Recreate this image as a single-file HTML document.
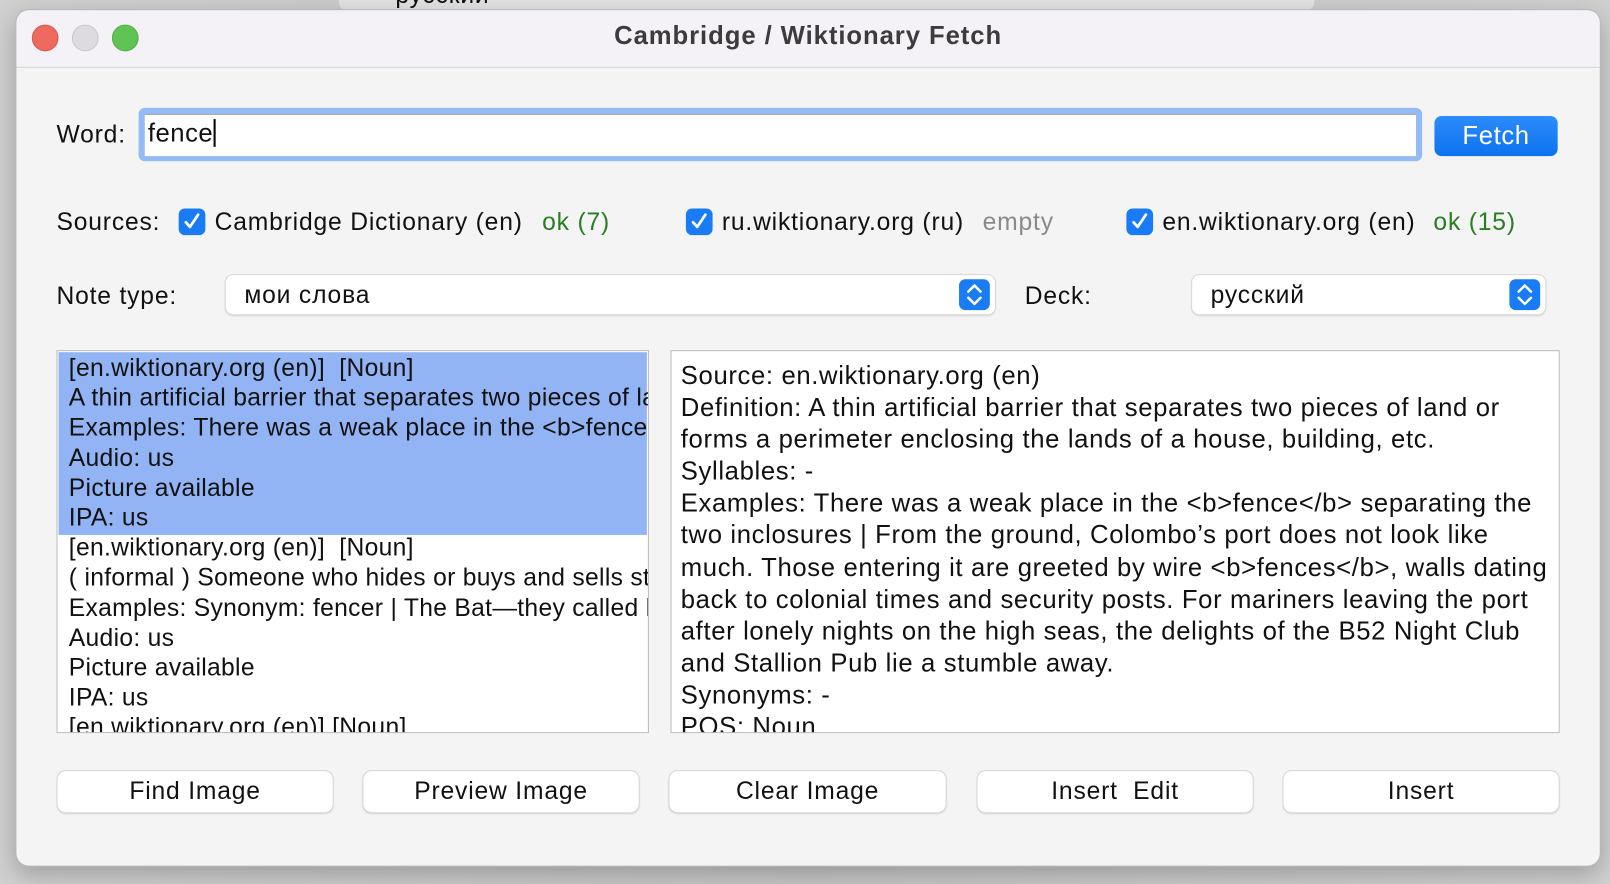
<!DOCTYPE html>
<html><head><meta charset="utf-8"><style>
body{margin:0;width:1610px;height:884px;overflow:hidden;background:linear-gradient(90deg,#d0d0d0,#c6c6c6 50%,#d0d0d0);font-family:"Liberation Sans","Noto Sans CJK SC",sans-serif;color:#111}
#w{position:absolute;left:0;top:0;width:1568px;height:861px;transform:scale(1.0268);transform-origin:0 0}
.a{position:absolute;white-space:nowrap}
.win{position:absolute;left:16px;top:10px;width:1542px;height:833px;background:#f4f4f4;border-radius:12px;box-shadow:0 0 0 1px #b8b8b8,0 8px 24px rgba(0,0,0,.25);overflow:hidden}
.tb{position:absolute;left:0;top:0;right:0;height:55px;background:#f5f2f7;border-bottom:1px solid #d4d4d4}
.dot{position:absolute;top:14px;width:24px;height:24px;border-radius:50%}
.t{font-size:24px;letter-spacing:0.8px}
.cb{position:absolute;width:26px;height:26px;background:#1a7cf5;border-radius:6px}
.cb svg{position:absolute;left:4px;top:4px}
.sel{position:absolute;background:#fff;border-radius:7px;box-shadow:0 0 0 1px #d8d8d8,0 1px 2px rgba(0,0,0,.2)}
.arr{position:absolute;right:5px;top:4px;width:30px;height:30px;background:#1a7cf5;border-radius:6px}
.box{position:absolute;background:#fff;border:1px solid #bcbcbc;overflow:hidden}
.btn{position:absolute;top:741px;width:268px;height:40px;background:#fff;border-radius:8px;box-shadow:0 0 0 1px #d6d6d6,0 1px 2px rgba(0,0,0,.2);font-size:24px;letter-spacing:0.8px;text-align:center;line-height:40px}
</style></head><body><div id="w">
<div class="a" style="left:330px;top:-10px;width:950px;height:20px;background:#e2e2e2;border-radius:8px"></div>
<div class="a t" style="left:385px;top:-18px">русский</div>
<div class="win">
<div class="tb">
<div class="dot" style="left:15px;background:#ee6a5e;border:1px solid #d55a4f"></div>
<div class="dot" style="left:54px;background:#dedbe0;border:1px solid #cac6cc"></div>
<div class="dot" style="left:93px;background:#5fc454;border:1px solid #4fae45"></div>
<div class="a" style="left:0;right:0;top:11px;text-align:center;font-size:25px;letter-spacing:0.9px;font-weight:bold;color:#3c3c3c">Cambridge / Wiktionary Fetch</div>
</div>
<div class="a t" style="left:39px;top:108px">Word:</div>
<div class="a" style="left:119px;top:95px;width:1250px;height:52px;background:#93bbf4;border-radius:6px"></div>
<div class="a" style="left:125px;top:101px;width:1238px;height:40px;background:#fff;border-top:1px solid #aaa"></div>
<div class="a" style="left:128px;top:106px;font-size:25px;letter-spacing:0.5px">fence<span style="display:inline-block;width:2px;height:27px;background:#000;vertical-align:-5px"></span></div>
<div class="a" style="left:1381px;top:103px;width:120px;height:39px;background:linear-gradient(#2d8cfb,#0d72f0);border-radius:7px;color:#fff;font-size:25px;letter-spacing:0.6px;text-align:center;line-height:39px">Fetch</div>

<div class="a t" style="left:39px;top:193px">Sources:</div>
<div class="cb" style="left:158px;top:193px"><svg width="18" height="18" viewBox="0 0 18 18"><path d="M3 9.5L7 14L15 2" stroke="#fff" stroke-width="2.6" fill="none" stroke-linecap="round" stroke-linejoin="round"/></svg></div>
<div class="a t" style="left:193px;top:193px">Cambridge Dictionary (en)</div>
<div class="a t" style="left:512px;top:193px;color:#2a7d22">ok (7)</div>
<div class="cb" style="left:652px;top:193px"><svg width="18" height="18" viewBox="0 0 18 18"><path d="M3 9.5L7 14L15 2" stroke="#fff" stroke-width="2.6" fill="none" stroke-linecap="round" stroke-linejoin="round"/></svg></div>
<div class="a t" style="left:687px;top:193px">ru.wiktionary.org (ru)</div>
<div class="a t" style="left:941px;top:193px;color:#8a8a8a">empty</div>
<div class="cb" style="left:1081px;top:193px"><svg width="18" height="18" viewBox="0 0 18 18"><path d="M3 9.5L7 14L15 2" stroke="#fff" stroke-width="2.6" fill="none" stroke-linecap="round" stroke-linejoin="round"/></svg></div>
<div class="a t" style="left:1116px;top:193px">en.wiktionary.org (en)</div>
<div class="a t" style="left:1380px;top:193px;color:#2a7d22">ok (15)</div>

<div class="a t" style="left:39px;top:265px">Note type:</div>
<div class="sel" style="left:204px;top:258px;width:749px;height:38px"><div class="a t" style="left:18px;top:6px">мои слова</div><div class="arr"><svg width="30" height="30" viewBox="0 0 30 30"><path d="M9 12L15 6L21 12M9 18L15 24L21 18" stroke="#fff" stroke-width="2.4" fill="none" stroke-linecap="round" stroke-linejoin="round"/></svg></div></div>
<div class="a t" style="left:982px;top:265px">Deck:</div>
<div class="sel" style="left:1145px;top:258px;width:344px;height:38px"><div class="a t" style="left:18px;top:6px">русский</div><div class="arr"><svg width="30" height="30" viewBox="0 0 30 30"><path d="M9 12L15 6L21 12M9 18L15 24L21 18" stroke="#fff" stroke-width="2.4" fill="none" stroke-linecap="round" stroke-linejoin="round"/></svg></div></div>

<div class="box" style="left:39px;top:331px;width:575px;height:371px;font-size:24px;letter-spacing:0.3px;line-height:29.2px">
<div style="background:#92b3f4;margin:1px;height:178px;position:absolute;left:0;right:0;top:0"></div>
<div class="a" style="left:11px;top:2px">[en.wiktionary.org (en)] &nbsp;[Noun]<br>A thin artificial barrier that separates two pieces of land<br>Examples: There was a weak place in the &lt;b&gt;fence&lt;/b&gt;<br>Audio: us<br>Picture available<br>IPA: us<br>[en.wiktionary.org (en)] &nbsp;[Noun]<br>( informal ) Someone who hides or buys and sells stolen<br>Examples: Synonym: fencer | The Bat—they called him<br>Audio: us<br>Picture available<br>IPA: us<br>[en.wiktionary.org (en)] [Noun]</div>
</div>
<div class="box" style="left:637px;top:331px;width:864px;height:371px;font-size:25px;letter-spacing:0.62px;line-height:31.1px">
<div class="a" style="left:9px;top:9px">Source: en.wiktionary.org (en)<br>Definition: A thin artificial barrier that separates two pieces of land or<br>forms a perimeter enclosing the lands of a house, building, etc.<br>Syllables: -<br>Examples: There was a weak place in the &lt;b&gt;fence&lt;/b&gt; separating the<br>two inclosures | From the ground, Colombo’s port does not look like<br>much. Those entering it are greeted by wire &lt;b&gt;fences&lt;/b&gt;, walls dating<br>back to colonial times and security posts. For mariners leaving the port<br>after lonely nights on the high seas, the delights of the B52 Night Club<br>and Stallion Pub lie a stumble away.<br>Synonyms: -<br>POS: Noun</div>
</div>

<div class="btn" style="left:40px">Find Image</div>
<div class="btn" style="left:338px">Preview Image</div>
<div class="btn" style="left:636px;width:269px">Clear Image</div>
<div class="btn" style="left:936px">Insert &nbsp;Edit</div>
<div class="btn" style="left:1234px">Insert</div>
</div>
</div></body></html>
